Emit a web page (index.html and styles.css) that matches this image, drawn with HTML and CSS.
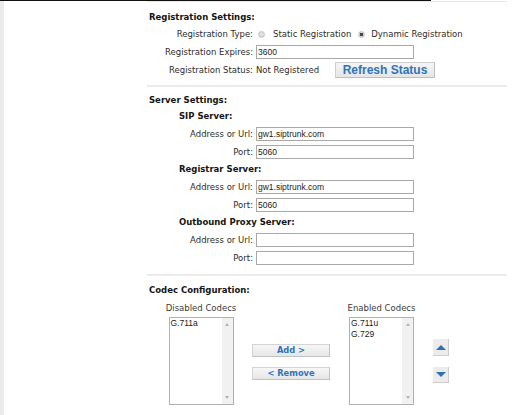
FILE: index.html
```html
<!DOCTYPE html>
<html>
<head>
<meta charset="utf-8">
<link rel="stylesheet" href="styles.css">
</head>
<body>
<div class="topline"></div>
<div class="page">
  <div class="leftbar"></div>
  <div class="main">
    <section class="sec sec-reg">
      <h2 class="sec-title">Registration Settings:</h2>
      <div class="row">
        <span class="lbl">Registration Type:</span>
        <div class="fld">
          <label class="opt"><span class="radio"></span>Static Registration</label>
          <label class="opt opt2"><span class="radio on"></span>Dynamic Registration</label>
        </div>
      </div>
      <div class="row">
        <span class="lbl">Registration Expires:</span>
        <div class="fld"><input class="inp" type="text" value="3600"></div>
      </div>
      <div class="row">
        <span class="lbl">Registration Status:</span>
        <div class="fld"><span class="status">Not Registered</span><button class="refresh">Refresh Status</button></div>
      </div>
    </section>

    <section class="sec sec-srv">
      <h2 class="sec-title">Server Settings:</h2>
      <h3 class="sub">SIP Server:</h3>
      <div class="row">
        <span class="lbl">Address or Url:</span>
        <div class="fld"><input class="inp" type="text" value="gw1.siptrunk.com"></div>
      </div>
      <div class="row">
        <span class="lbl">Port:</span>
        <div class="fld"><input class="inp" type="text" value="5060"></div>
      </div>
      <h3 class="sub">Registrar Server:</h3>
      <div class="row">
        <span class="lbl">Address or Url:</span>
        <div class="fld"><input class="inp" type="text" value="gw1.siptrunk.com"></div>
      </div>
      <div class="row">
        <span class="lbl">Port:</span>
        <div class="fld"><input class="inp" type="text" value="5060"></div>
      </div>
      <h3 class="sub">Outbound Proxy Server:</h3>
      <div class="row">
        <span class="lbl">Address or Url:</span>
        <div class="fld"><input class="inp" type="text" value=""></div>
      </div>
      <div class="row">
        <span class="lbl">Port:</span>
        <div class="fld"><input class="inp" type="text" value=""></div>
      </div>
    </section>

    <section class="sec sec-codec">
      <h2 class="sec-title">Codec Configuration:</h2>
      <div class="codecs">
        <div class="ccol ccol-dis">
          <div class="clabel">Disabled Codecs</div>
          <div class="lb">
            <div class="lb-items"><div>G.711a</div></div>
            <div class="lb-scroll"><span class="sa sa-up"></span><span class="sa sa-down"></span></div>
          </div>
        </div>
        <div class="ccol ccol-btn">
          <button class="mv">Add &gt;</button>
          <button class="mv mv2">&lt; Remove</button>
        </div>
        <div class="ccol ccol-en">
          <div class="clabel">Enabled Codecs</div>
          <div class="lb">
            <div class="lb-items"><div>G.711u</div><div>G.729</div></div>
            <div class="lb-scroll"><span class="sa sa-up"></span><span class="sa sa-down"></span></div>
          </div>
        </div>
        <div class="ccol ccol-arr">
          <button class="arr"><span class="tri tri-up"></span></button>
          <button class="arr arr2"><span class="tri tri-down"></span></button>
        </div>
      </div>
    </section>
  </div>
</div>
</body>
</html>
```
FILE: styles.css
```css
html, body {
  margin: 0;
  padding: 0;
  background: #fff;
}
body {
  font-family: "DejaVu Sans", Verdana, sans-serif;
  font-size: 8.5px;
  color: #2c2c2c;
}
.topline {
  width: 431px;
  height: 1px;
  background: #111;
}
.page {
  display: flex;
}
.leftbar {
  width: 4px;
  min-height: 414px;
  background: #ebebeb;
}
.main {
  margin-left: 143px;
  width: 360px;
  border-top: 1px solid #e8e8e8;
}
.sec {
  border-bottom: 2px solid #ebebeb;
}
.sec-reg {
  padding: 8px 0 6px;
}
.sec-srv {
  padding: 6px 0 7px;
}
.sec-codec {
  padding: 7px 0 0;
  border-bottom: none;
}
.sec-title {
  margin: 0;
  padding-left: 2px;
  font-size: 8.5px;
  font-weight: bold;
  line-height: 14px;
  color: #151515;
}
.sub {
  margin: 1px 0 0;
  padding-left: 32px;
  font-size: 8.5px;
  font-weight: bold;
  line-height: 17px;
  height: 17px;
  color: #151515;
}
.sec-srv .sub ~ .sub {
  margin-top: 0;
}
.sec-reg .sec-title + .row {
  margin-top: 1px;
}
.row {
  display: grid;
  grid-template-columns: 106px 1fr;
  column-gap: 3px;
  align-items: center;
  height: 18px;
}
.lbl {
  text-align: right;
  white-space: nowrap;
}
.fld {
  display: flex;
  align-items: center;
}
.opt {
  display: flex;
  align-items: center;
  white-space: nowrap;
}
.opt2 {
  margin-left: 7px;
}
.radio {
  display: inline-block;
  width: 7px;
  height: 7px;
  box-sizing: border-box;
  border-radius: 50%;
  margin: 0 8px 0 2px;
  background: radial-gradient(circle at 50% 40%, #e6e6e6 0, #cfcfcf 100%);
  border: 1px solid #c4c4c4;
}
.opt2 .radio {
  margin-left: 0;
  margin-right: 6px;
}
.radio.on {
  background: radial-gradient(circle, #444 0, #444 1.4px, #d6d6d6 1.9px, #cfcfcf 100%);
}
.inp {
  width: 158px;
  height: 14px;
  box-sizing: border-box;
  margin: 0;
  padding: 0 1px;
  border: 1px solid #a8a8a8;
  border-radius: 0;
  font-family: "Liberation Sans", Arial, sans-serif;
  font-size: 8.5px;
  color: #1a1a1a;
  background: #fff;
  outline: none;
}
.status {
  white-space: nowrap;
}
.refresh {
  margin: 0 0 0 16px;
  width: 100px;
  height: 16px;
  padding: 0;
  box-sizing: border-box;
  border: 1px solid #cfcfcf;
  border-right-color: #bdbdbd;
  border-bottom-color: #bdbdbd;
  background: linear-gradient(#f5f5f5, #e6e6e6);
  font-family: "Liberation Sans", Arial, sans-serif;
  font-size: 12px;
  font-weight: bold;
  line-height: 14px;
  color: #2f74b9;
}
.codecs {
  display: flex;
  margin: 4px 0 0 19px;
}
.ccol {
  display: flex;
  flex-direction: column;
}
.ccol-dis {
  width: 70px;
  align-items: center;
}
.ccol-btn {
  width: 78px;
  margin-left: 16px;
  padding-top: 43px;
}
.ccol-en {
  width: 67px;
  margin-left: 18px;
  align-items: center;
}
.ccol-arr {
  width: 16px;
  margin-left: 18px;
  padding-top: 38px;
}
.clabel {
  line-height: 14px;
  white-space: nowrap;
  color: #3a3a3a;
}
.lb {
  margin-top: 2px;
  width: 65px;
  height: 88px;
  box-sizing: border-box;
  border: 1px solid #b0b0b0;
  display: flex;
  background: #fff;
}
.lb-items {
  flex: 1;
  padding: 0 1px;
  font-family: "Liberation Sans", Arial, sans-serif;
  font-size: 8.5px;
  line-height: 11px;
  color: #1a1a1a;
}
.lb-scroll {
  width: 11px;
  background: #f1f1f1;
  display: flex;
  flex-direction: column;
  justify-content: space-between;
  align-items: center;
  padding: 5px 0 5px;
  box-sizing: border-box;
}
.sa {
  width: 0;
  height: 0;
  border-left: 2.5px solid transparent;
  border-right: 2.5px solid transparent;
}
.sa-up {
  border-bottom: 3px solid #b4b4b4;
}
.sa-down {
  border-top: 3px solid #b4b4b4;
}
.mv {
  display: block;
  width: 78px;
  height: 13px;
  margin: 0;
  padding: 0;
  box-sizing: border-box;
  border: 1px solid #d4d4d4;
  border-right-color: #c2c2c2;
  border-bottom-color: #c2c2c2;
  background: linear-gradient(#f6f6f6, #e6e6e6);
  font-family: "DejaVu Sans", Verdana, sans-serif;
  font-size: 8.3px;
  font-weight: bold;
  line-height: 11px;
  color: #2f74b9;
}
.mv2 {
  margin-top: 10px;
}
.arr {
  display: flex;
  align-items: center;
  justify-content: center;
  width: 16px;
  height: 17px;
  margin: 0;
  padding: 0;
  box-sizing: border-box;
  border: none;
  border-right: 1px solid #cdcdcd;
  border-bottom: 1px solid #cdcdcd;
  background: #ececec;
}
.arr2 {
  margin-top: 11px;
  height: 16px;
}
.tri {
  width: 0;
  height: 0;
  border-left: 5.5px solid transparent;
  border-right: 5.5px solid transparent;
}
.tri-up {
  border-bottom: 5px solid #2f6fb4;
}
.tri-down {
  border-top: 5px solid #2f6fb4;
}
```
